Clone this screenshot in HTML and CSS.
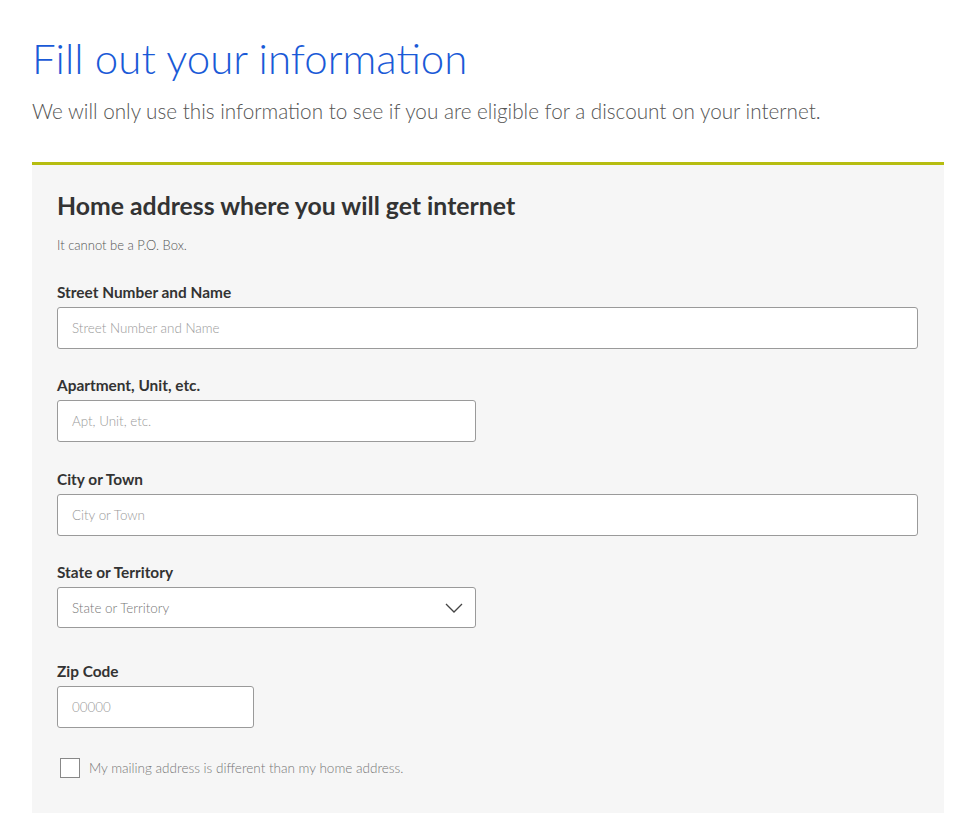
FILE: index.html
```html
<!DOCTYPE html>
<html lang="en">
<head>
<meta charset="utf-8">
<title>Fill out your information</title>
<link rel="stylesheet" href="styles.css">
</head>
<body>
<main class="page">
  <h1 class="title">Fill out your information</h1>
  <p class="intro">We will only use this information to see if you are eligible for a discount on your internet.</p>
  <section class="panel">
    <h2 class="panel-title">Home address where you will get internet</h2>
    <p class="hint">It cannot be a P.O. Box.</p>
    <div class="field first">
      <label class="label">Street Number and Name</label>
      <div class="input full">Street Number and Name</div>
    </div>
    <div class="field">
      <label class="label">Apartment, Unit, etc.</label>
      <div class="input half">Apt, Unit, etc.</div>
    </div>
    <div class="field wide-gap">
      <label class="label">City or Town</label>
      <div class="input full">City or Town</div>
    </div>
    <div class="field">
      <label class="label">State or Territory</label>
      <div class="input half select">State or Territory
        <svg class="chev" width="18" height="10" viewBox="0 0 18 10"><path d="M1 1 L9 9 L17 1" fill="none" stroke="#444" stroke-width="1.3"/></svg>
      </div>
    </div>
    <div class="field zip-field">
      <label class="label">Zip Code</label>
      <div class="input zip">00000</div>
    </div>
    <div class="check-row">
      <span class="box"></span>
      <span class="check-text">My mailing address is different than my home address.</span>
    </div>
  </section>
</main>
</body>
</html>
```
FILE: styles.css
```css
html, body { margin: 0; padding: 0; background: #fff; }
body { font-family: Lato, "Open Sans", sans-serif; }
.page { padding: 30px 11px 0 32px; }
.title {
  margin: 0;
  font-weight: 300;
  font-size: 42px;
  line-height: 56px;
  color: #1a5ad7;
}
.intro {
  margin: 10px 0 0;
  font-weight: 300;
  font-size: 20.7px;
  line-height: 30px;
  color: #555;
}
.panel {
  margin-top: 36px;
  border-top: 3px solid #b6bd10;
  background: #f6f6f6;
  padding: 25px 26px 32px 25px;
  height: 651px;
  box-sizing: border-box;
}
.panel-title {
  margin: 0;
  font-size: 24.8px;
  font-weight: 700;
  line-height: 32px;
  color: #333;
}
.hint {
  margin: 13px 0 0;
  font-size: 13px;
  font-weight: 300;
  line-height: 20px;
  color: #555;
}
.field { margin-top: 26px; }
.field.first { margin-top: 27px; }
.field.wide-gap { margin-top: 27px; }
.field.zip-field { margin-top: 33px; }
.label {
  display: block;
  font-size: 15.4px;
  font-weight: 700;
  line-height: 20px;
  color: #333;
  margin-bottom: 5px;
}
.input {
  box-sizing: border-box;
  height: 42px;
  border: 1px solid #9a9a9a;
  border-radius: 3px;
  background: #fff;
  padding: 0 14px;
  display: flex;
  align-items: center;
  font-size: 13.4px;
  font-weight: 300;
  color: #999;
}
.full { width: 861px; }
.half { width: 419px; }
.zip { width: 197px; }
.select { justify-content: space-between; color: #777; height: 41px; padding-right: 12px; }
.check-row {
  display: flex;
  align-items: center;
  margin-top: 30px;
  padding-left: 3px;
}
.box {
  width: 18px;
  height: 18px;
  border: 1px solid #888;
  background: #fff;
}
.check-text {
  margin-left: 9px;
  font-size: 13.5px;
  font-weight: 300;
  color: #777;
}
```
